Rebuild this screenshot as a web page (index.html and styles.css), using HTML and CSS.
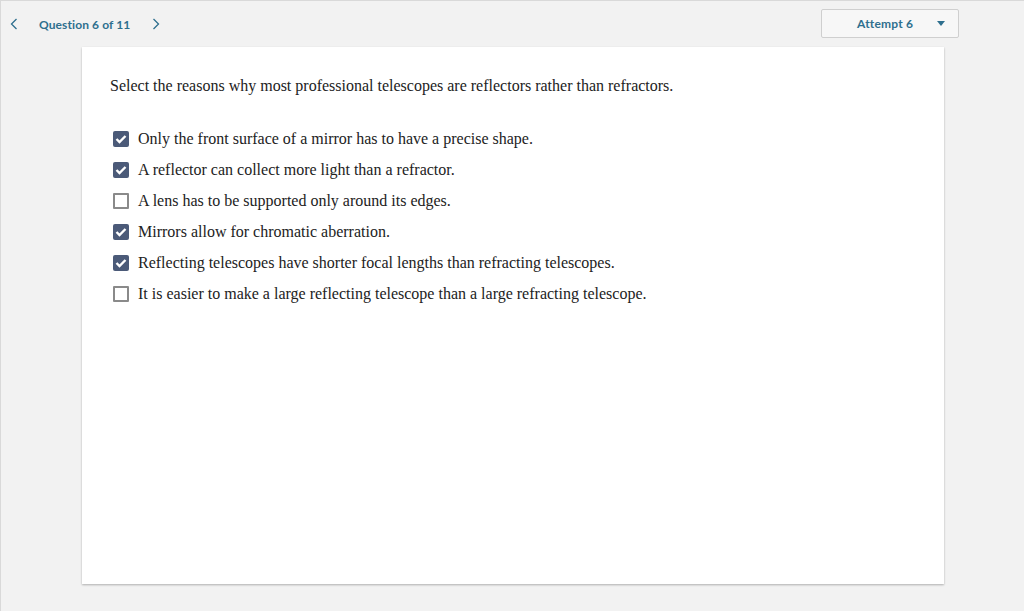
FILE: index.html
```html
<!DOCTYPE html>
<html>
<head>
<meta charset="utf-8">
<link rel="stylesheet" href="styles.css">
</head>
<body>
<div class="page">
  <header class="topbar">
    <div class="nav">
      <span class="arrow prev"><svg width="8" height="12" viewBox="0 0 8 12"><path d="M6.5 1 L1.5 6 L6.5 11" fill="none" stroke="#2e6f8e" stroke-width="1.3"/></svg></span>
      <span class="qlabel">Question 6 of 11</span>
      <span class="arrow next"><svg width="8" height="12" viewBox="0 0 8 12"><path d="M1.5 1 L6.5 6 L1.5 11" fill="none" stroke="#2e6f8e" stroke-width="1.3"/></svg></span>
    </div>
    <div class="attempt">
      <span class="attempt-label">Attempt 6</span>
      <svg class="caret" width="8" height="5" viewBox="0 0 8 5"><path d="M0 0 L8 0 L4 5 Z" fill="#2e6f8e"/></svg>
    </div>
  </header>
  <main class="card">
    <p class="question">Select the reasons why most professional telescopes are reflectors rather than refractors.</p>
    <ul class="options">
      <li class="option"><span class="box checked"><svg width="12" height="10" viewBox="0 0 12 10"><path d="M1.5 5 L4.5 8 L10.5 2" fill="none" stroke="#fff" stroke-width="2.4"/></svg></span><span>Only the front surface of a mirror has to have a precise shape.</span></li>
      <li class="option"><span class="box checked"><svg width="12" height="10" viewBox="0 0 12 10"><path d="M1.5 5 L4.5 8 L10.5 2" fill="none" stroke="#fff" stroke-width="2.4"/></svg></span><span>A reflector can collect more light than a refractor.</span></li>
      <li class="option"><span class="box"></span><span>A lens has to be supported only around its edges.</span></li>
      <li class="option"><span class="box checked"><svg width="12" height="10" viewBox="0 0 12 10"><path d="M1.5 5 L4.5 8 L10.5 2" fill="none" stroke="#fff" stroke-width="2.4"/></svg></span><span>Mirrors allow for chromatic aberration.</span></li>
      <li class="option"><span class="box checked"><svg width="12" height="10" viewBox="0 0 12 10"><path d="M1.5 5 L4.5 8 L10.5 2" fill="none" stroke="#fff" stroke-width="2.4"/></svg></span><span>Reflecting telescopes have shorter focal lengths than refracting telescopes.</span></li>
      <li class="option"><span class="box"></span><span>It is easier to make a large reflecting telescope than a large refracting telescope.</span></li>
    </ul>
  </main>
</div>
</body>
</html>
```

FILE: styles.css
```css
html, body {
  margin: 0;
  padding: 0;
  background: #f2f2f2;
}
.page {
  width: 1023px;
  height: 610px;
  border-top: 1px solid #d9d9d9;
  border-left: 1px solid #d9d9d9;
  background: #f2f2f2;
  font-family: "Source Sans Pro", "Lato", "Open Sans", sans-serif;
}
.topbar {
  display: flex;
  justify-content: space-between;
  align-items: flex-start;
  height: 45px;
  padding: 0 65px 0 0;
}
.nav {
  display: flex;
  align-items: center;
  height: 46px;
}
.arrow {
  display: flex;
  align-items: center;
}
.prev { margin-left: 9px; }
.qlabel {
  margin-left: 21px;
  color: #2e6f8e;
  font-size: 12px;
  font-weight: 700;
  letter-spacing: 0.1px;
}
.next { margin-left: 22px; }
.attempt {
  margin-top: 8px;
  width: 138px;
  height: 29px;
  border: 1px solid #cfcfcf;
  border-radius: 2px;
  background: #f7f7f7;
  display: flex;
  align-items: center;
  box-sizing: border-box;
}
.attempt-label {
  margin-left: 35px;
  color: #2e6f8e;
  font-size: 12px;
  font-weight: 700;
  letter-spacing: 0.2px;
}
.caret {
  margin-left: 24px;
}
.card {
  margin: 1px 0 0 81px;
  width: 862px;
  height: 537px;
  background: #fff;
  box-shadow: 0 1px 2px rgba(0,0,0,0.28);
  box-sizing: border-box;
  padding: 30px 28px;
  font-family: "Liberation Serif", "Times New Roman", serif;
  color: #222;
}
.question {
  margin: 0;
  font-size: 16px;
  line-height: 18px;
}
.options {
  list-style: none;
  margin: 28px 0 0 0;
  padding: 0;
}
.option {
  display: flex;
  align-items: center;
  height: 31px;
  font-size: 16px;
}
.box {
  width: 16px;
  height: 16px;
  box-sizing: border-box;
  border: 2px solid #8a8a8a;
  border-radius: 1px;
  margin: 0 9px 0 3px;
  display: flex;
  align-items: center;
  justify-content: center;
  background: #fff;
}
.box.checked {
  background: #4b5a78;
  border: none;
  border-radius: 2px;
}
```
